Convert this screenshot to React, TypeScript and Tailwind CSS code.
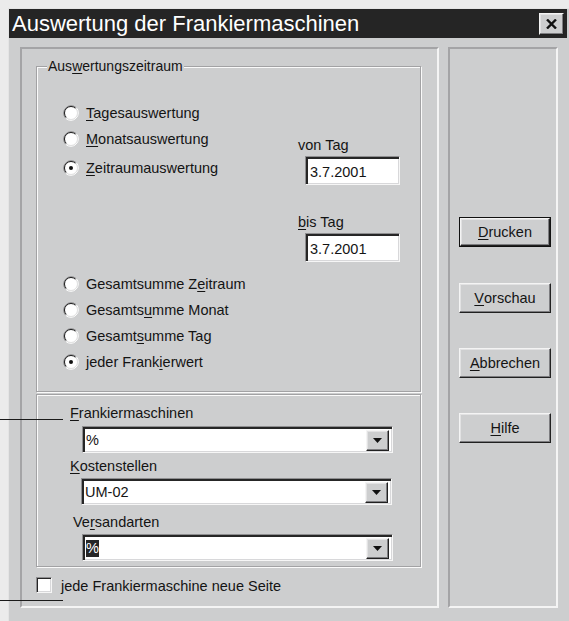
import React from 'react'

const FACE = 'bg-[#cdcecf]'

// Label with one underlined accelerator letter
function Acc({ text, at }: { text: string; at?: number }) {
  if (at === undefined) return <>{text}</>
  return (
    <>
      {text.slice(0, at)}
      <span className="underline underline-offset-[2px] decoration-1">{text[at]}</span>
      {text.slice(at + 1)}
    </>
  )
}

function Radio({ checked }: { checked?: boolean }) {
  return (
    <svg width="16" height="16" viewBox="0 0 16 16" className="shrink-0">
      <circle cx="8" cy="8" r="6.5" fill="#fff" />
      <path d="M2.7 13.3A7.5 7.5 0 0 1 13.3 2.7" fill="none" stroke="#8a8a8c" strokeWidth="1" />
      <path d="M13.3 2.7A7.5 7.5 0 0 1 2.7 13.3" fill="none" stroke="#fff" strokeWidth="1" />
      <path d="M3.4 12.6A6.5 6.5 0 0 1 12.6 3.4" fill="none" stroke="#1c1c1c" strokeWidth="1" />
      <path d="M12.6 3.4A6.5 6.5 0 0 1 3.4 12.6" fill="none" stroke="#e2e2e2" strokeWidth="1" />
      {checked && <circle cx="8" cy="8" r="2" fill="#111" />}
    </svg>
  )
}

function RadioRow({ text, at, checked, className = '' }: { text: string; at?: number; checked?: boolean; className?: string }) {
  return (
    <div className={`flex items-center gap-[7px] h-[26px] ${className}`}>
      <Radio checked={checked} />
      <span><Acc text={text} at={at} /></span>
    </div>
  )
}

// Sunken white field frame
const SUNKEN =
  'bg-white border border-t-[#8e8e90] border-l-[#8e8e90] border-b-[#f6f6f6] border-r-[#f6f6f6] shadow-[inset_2px_2px_0_#262626,inset_-1px_-1px_0_#d8d8da]'

const RAISED =
  'border border-t-[#f4f4f4] border-l-[#f4f4f4] border-b-[#202020] border-r-[#202020] shadow-[inset_-1px_-1px_0_#7d7d80,inset_1px_1px_0_#e2e2e3]'

function DateField({ value }: { value: string }) {
  return (
    <div className={`ml-[7px] w-[95px] h-[29px] flex items-center pl-[4px] pt-[2px] ${SUNKEN}`}>
      {value}
    </div>
  )
}

function Combo({ value, selected, className = '' }: { value: string; selected?: boolean; className?: string }) {
  return (
    <div className={`w-[311px] h-[27px] flex items-center pl-[3px] pr-[3px] pt-[1px] ${SUNKEN} ${className}`}>
      <span className={selected ? 'bg-[#262626] text-white leading-[17px]' : ''}>{value}</span>
      <div className={`ml-auto w-[23px] h-[21px] mt-[1px] flex items-center justify-center ${FACE} ${RAISED}`}>
        <svg width="9" height="5" viewBox="0 0 9 5"><path d="M0 0h9L4.5 5z" fill="#111" /></svg>
      </div>
    </div>
  )
}

function PushButton({ text, at, isDefault }: { text: string; at: number; isDefault?: boolean }) {
  const inner = (
    <div className={`w-full h-full flex items-center justify-center ${FACE} ${RAISED}`}>
      <Acc text={text} at={at} />
    </div>
  )
  return (
    <button className={`w-[92px] h-[30px] p-0 ${isDefault ? 'border border-[#111]' : ''}`}>{inner}</button>
  )
}

const GROUP = 'border border-[#a2a2a4] shadow-[inset_1px_1px_0_#fafafa,1px_1px_0_#fafafa]'

export default function App() {
  return (
    <div className="relative w-[569px] h-[621px] bg-white overflow-hidden font-['Liberation_Sans',Arial,sans-serif] text-[14.5px] text-[#141414] leading-[18px]">
      {/* callout lines */}
      <div className="absolute left-0 top-[419px] w-[63px] h-px bg-[#1a1a1a] z-10" />
      <div className="absolute left-0 top-[600px] w-[63px] h-px bg-[#1a1a1a] z-10" />

      <div className="flex h-full pt-[8px] bg-[#ebebeb]">
        <div className={`ml-[8px] w-[561px] flex flex-col border-t border-l border-[#e4e4e4] ${FACE}`}>
          {/* title bar */}
          <div className="h-[29px] mr-[2px] bg-[#252525] flex items-center pl-[3px] pr-[3px]">
            <span className="text-white text-[22px] leading-[26px]">Auswertung der Frankiermaschinen</span>
            <div className={`ml-auto w-[25px] h-[22px] flex items-center justify-center ${FACE} ${RAISED}`}>
              <svg width="11" height="10" viewBox="0 0 11 10">
                <path d="M1 0.5l9 9M10 0.5l-9 9" stroke="#111" strokeWidth="2.4" />
              </svg>
            </div>
          </div>

          <div className="flex pt-[9px] pl-[11px] gap-[9px]">
            {/* left panel */}
            <div className="w-[419px] h-[561px] border-2 border-t-[#a4a4a6] border-l-[#a4a4a6] border-b-[#f4f4f4] border-r-[#f4f4f4] pl-[14px] pt-[17px]">
              {/* Auswertungszeitraum */}
              <div className={`relative w-[385px] h-[326px] ${GROUP} pl-[26px]`}>
                <span className={`absolute -top-[10px] left-[10px] px-[1px] text-[14px] ${FACE}`}>
                  <Acc text="Auswertungszeitraum" at={3} />
                </span>
                <div className="flex">
                  <div className="w-[235px] pt-[33px]">
                    <RadioRow text="Tagesauswertung" at={0} />
                    <RadioRow text="Monatsauswertung" at={0} />
                    <RadioRow text="Zeitraumauswertung" at={0} checked className="mt-[3px]" />
                  </div>
                  <div className="pt-[69px]">
                    <div>von Tag</div>
                    <div className="mt-[2px]"><DateField value="3.7.2001" /></div>
                    <div className="mt-[28px]"><Acc text="bis Tag" at={0} /></div>
                    <div className="mt-[2px]"><DateField value="3.7.2001" /></div>
                  </div>
                </div>
                <div className="mt-[9px]">
                  <RadioRow text="Gesamtsumme Zeitraum" at={13} />
                  <RadioRow text="Gesamtsumme Monat" at={7} />
                  <RadioRow text="Gesamtsumme Tag" at={6} />
                  <RadioRow text="jeder Frankierwert" at={11} checked />
                </div>
              </div>

              {/* Maschinen, Kostenstellen, Versandarten */}
              <div className={`w-[385px] h-[173px] mt-[2px] ${GROUP} pl-[33px] pt-[9px]`}>
                <div><Acc text="Frankiermaschinen" at={0} /></div>
                <Combo value="%" className="ml-[12px] mt-[4px]" />
                <div className="mt-[4px]"><Acc text="Kostenstellen" at={0} /></div>
                <Combo value="UM-02" className="ml-[11px] mt-[3px]" />
                <div className="mt-[8px] ml-[3px]"><Acc text="Versandarten" at={2} /></div>
                <Combo value="%" selected className="ml-[12px] mt-[3px]" />
              </div>

              <div className="flex items-center mt-[10px] h-[16px] gap-[9px]">
                <div className="w-[16px] h-[16px] bg-white border border-t-[#8e8e90] border-l-[#8e8e90] border-b-[#f6f6f6] border-r-[#f6f6f6] shadow-[inset_1px_1px_0_#262626,inset_-1px_-1px_0_#d8d8da]" />
                <span className="pt-[1px]">jede Frankiermaschine neue Seite</span>
              </div>
            </div>

            {/* right panel with buttons */}
            <div className="w-[110px] h-[561px] border-2 border-t-[#a4a4a6] border-l-[#a4a4a6] border-b-[#f4f4f4] border-r-[#f4f4f4] pl-[9px] pt-[168px] flex flex-col gap-[36px]">
              <PushButton text="Drucken" at={0} isDefault />
              <PushButton text="Vorschau" at={0} />
              <div className="-mt-[1px]"><PushButton text="Abbrechen" at={0} /></div>
              <div className="-mt-[1px]"><PushButton text="Hilfe" at={0} /></div>
            </div>
          </div>
        </div>
      </div>
    </div>
  )
}
